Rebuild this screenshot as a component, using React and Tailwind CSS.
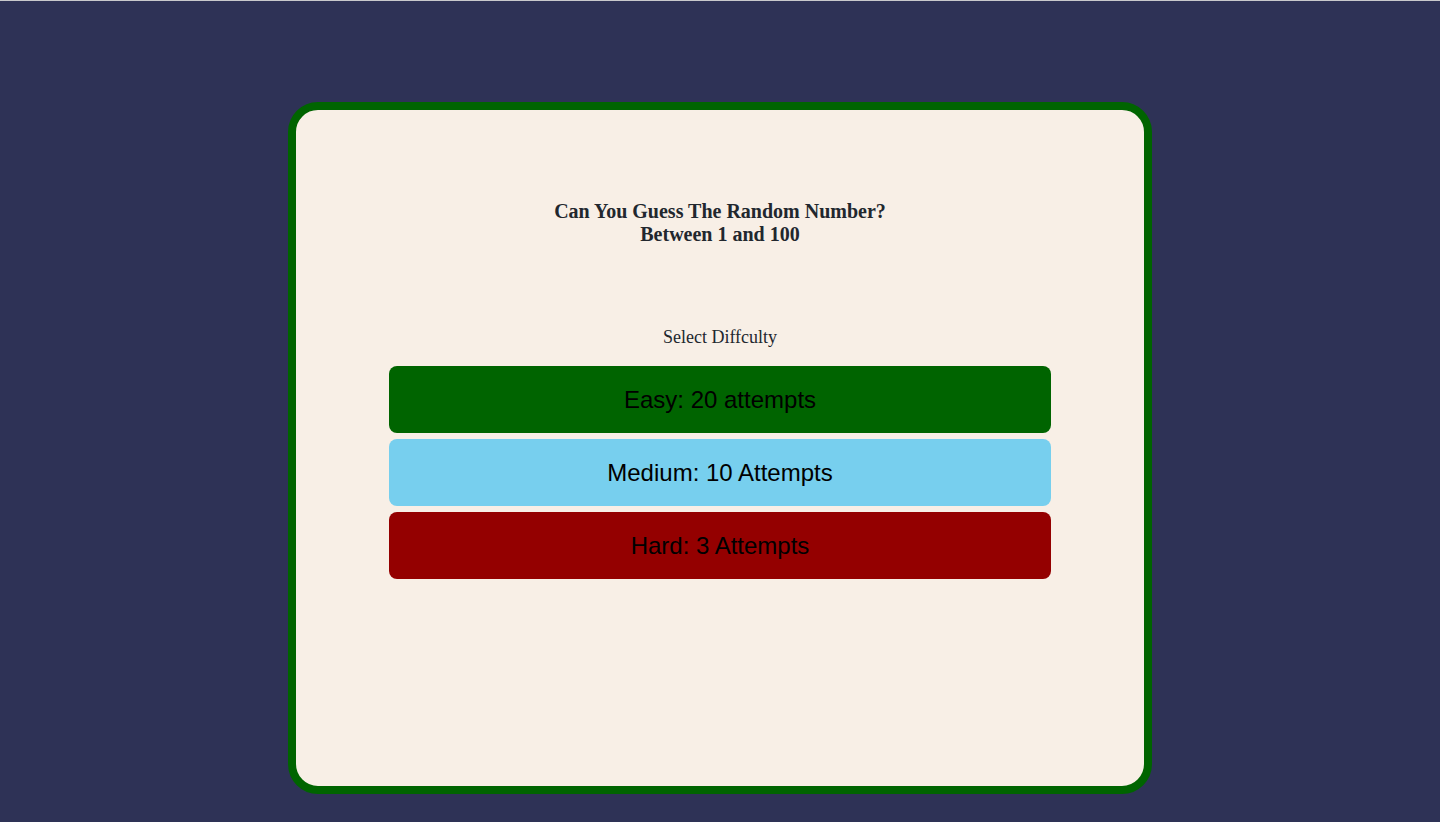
export default function App() {
  return (
    <div className="min-h-[822px] w-full bg-[#2e3256] border-t border-[#c9c9cc] flex justify-center pt-[101px]" style={{ fontFamily: '"Liberation Serif", serif' }}>
      <div className="w-[864px] h-[692px] border-8 border-[#006400] rounded-[30px] bg-[#f8efe6] flex flex-col items-center">
        <h1 className="mt-[90px] text-center font-bold text-[20px] leading-[23px] text-[#22272e]">
          Can You Guess The Random Number?
          <br />
          Between 1 and 100
        </h1>
        <p className="mt-[80px] text-[18px] leading-[22px] text-[#22272e]">Select Diffculty</p>
        <div className="mt-[18px] w-[662px] flex flex-col gap-[6px]" style={{ fontFamily: '"Liberation Sans", Arial, sans-serif' }}>
          <button className="h-[67px] rounded-[8px] bg-[#006400] text-black text-[24px]">Easy: 20 attempts</button>
          <button className="h-[67px] rounded-[8px] bg-[#77cfee] text-black text-[24px]">Medium: 10 Attempts</button>
          <button className="h-[67px] rounded-[8px] bg-[#940000] text-black text-[24px]">Hard: 3 Attempts</button>
        </div>
      </div>
    </div>
  );
}
